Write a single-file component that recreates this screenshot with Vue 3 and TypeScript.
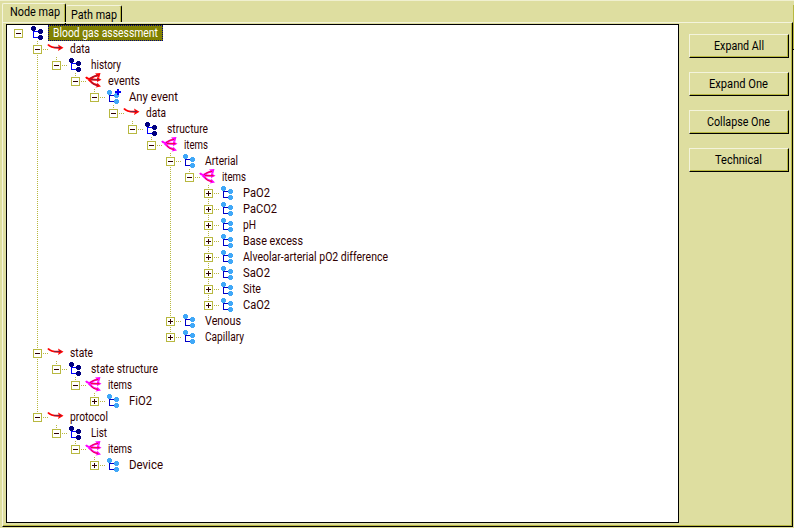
<script setup lang="ts">
import { defineComponent, h, shallowRef, type PropType, type VNode } from 'vue'

type Kind = 'dark' | 'light' | 'event' | 'arrow' | 'multi' | 'items'

interface TreeNode {
  label: string
  width: number
  kind: Kind
  closed?: boolean
  children?: TreeNode[]
}

const leaf = (label: string, width: number): TreeNode => ({ label, width, kind: 'light', closed: true })

const tree: TreeNode = {
  label: 'Blood gas assessment', width: 105, kind: 'dark',
  children: [
    { label: 'data', width: 20, kind: 'arrow', children: [
      { label: 'history', width: 30, kind: 'dark', children: [
        { label: 'events', width: 32, kind: 'multi', children: [
          { label: 'Any event', width: 49, kind: 'event', children: [
            { label: 'data', width: 20, kind: 'arrow', children: [
              { label: 'structure', width: 41, kind: 'dark', children: [
                { label: 'items', width: 24, kind: 'items', children: [
                  { label: 'Arterial', width: 33, kind: 'light', children: [
                    { label: 'items', width: 24, kind: 'items', children: [
                      leaf('PaO2', 27), leaf('PaCO2', 34), leaf('pH', 13), leaf('Base excess', 60),
                      leaf('Alveolar-arterial pO2 difference', 145), leaf('SaO2', 27), leaf('Site', 18), leaf('CaO2', 27),
                    ] },
                  ] },
                  leaf('Venous', 36),
                  leaf('Capillary', 39),
                ] },
              ] },
            ] },
          ] },
        ] },
      ] },
    ] },
    { label: 'state', width: 23, kind: 'arrow', children: [
      { label: 'state structure', width: 67, kind: 'dark', children: [
        { label: 'items', width: 24, kind: 'items', children: [leaf('FiO2', 23)] },
      ] },
    ] },
    { label: 'protocol', width: 38, kind: 'arrow', children: [
      { label: 'List', width: 16, kind: 'dark', children: [
        { label: 'items', width: 24, kind: 'items', children: [leaf('Device', 34)] },
      ] },
    ] },
  ],
}

const buttons = [
  { label: 'Expand All', width: 50 },
  { label: 'Expand One', width: 59 },
  { label: 'Collapse One', width: 63 },
  { label: 'Technical', width: 47 },
]
const selected = shallowRef<TreeNode>(tree)

/* Text line squeezed to a fixed advance width */
const FitText = defineComponent({
  props: { text: { type: String, required: true }, width: { type: Number, required: true } },
  setup: (p) => () =>
    h('svg', { class: 'fit', width: p.width + 1, height: 16 }, [
      h('text', { x: 0, y: 12, textLength: p.width, lengthAdjust: 'spacingAndGlyphs' }, p.text),
    ]),
})

function glyph(kind: Kind): VNode[] {
  if (kind === 'arrow') {
    return [
      h('path', { d: 'M-1 3.5 C1 6 4 7 11 6.7', class: 'stroke red' }),
      h('path', { d: 'M9 3.5 L14.5 6.7 L9 10 L10 6.7Z', fill: '#f00' }),
      h('path', { d: 'M5 6.5 H12', class: 'thin core' }),
    ]
  }
  if (kind === 'multi' || kind === 'items') {
    const pink = kind === 'items'
    return [
      h('path', {
        d: 'M-1 4 C0 6 3 7 12 6.7 M1.5 6.5 C4 6 5 3 11 2.5 M1.5 6.5 C4 8 5 12 11 12.3',
        class: ['stroke', pink ? 'pink' : 'red'],
      }),
      h('path', { d: 'M8 0.5 L13.5 0 L12 5.5 L10.5 3Z M10 4 L14.5 6.7 L10 9Z M10 9.5 L14 13.5 L8.5 14.5 L10.5 12.3Z', fill: pink ? '#f0f' : '#f00' }),
      h('path', { d: 'M3 5.7 C5 4.5 6 3 11 2.5 M4 6.7 H12.5 M4 8.5 C5.5 11 7 12 11 12.3', class: ['thin', pink ? 'warm' : 'core'] }),
    ]
  }
  const dark = kind === 'dark'
  const dot = (x: number, y: number) =>
    h('path', { d: `M${x + 1} ${y}h3v1h1v3h-1v1h-3v-1h-1v-3h1z`, fill: dark ? '#000080' : '#40a8f8' })
  const parts = [
    h('path', { d: 'M3.5 5V12.5H9M3.5 6.5H9', class: ['thin', dark ? 'blue' : 'deep'] }),
    dot(1, 1), dot(8, 4), dot(8, 10),
  ]
  if (kind === 'event') parts.push(h('path', { d: 'M11 0h2v2h2v2h-2v2h-2v-2h-2v-2h2z', fill: '#0000f0' }))
  return parts
}

const Branch = defineComponent({
  name: 'Branch',
  props: { node: { type: Object as PropType<TreeNode>, required: true }, root: Boolean },
  setup(p) {
    return (): VNode => {
      const n = p.node
      const arrowLike = ['arrow', 'multi', 'items'].includes(n.kind)
      return h('li', { class: ['branch', { root: p.root }] }, [
        h('div', { class: 'row' }, [
          h('svg', { class: 'toggle', width: 9, height: 9 }, [
            h('rect', { x: 0.5, y: 0.5, width: 8, height: 8, fill: '#fff', stroke: '#b8b840' }),
            h('path', { d: n.closed ? 'M2 4.5H7M4.5 2V7' : 'M2 4.5H7', stroke: '#300000' }),
          ]),
          h('span', { class: 'link' }),
          h('svg', { class: ['icon', { smooth: arrowLike }], width: 16, height: 16 }, glyph(n.kind)),
          h('span', {
            class: ['label', { near: arrowLike, selected: selected.value === n }],
            onClick: () => { selected.value = n },
          }, [h(FitText, { text: n.label, width: n.width })]),
        ]),
        n.children ? h('ul', { class: 'children' }, n.children.map((c) => h(Branch, { node: c }))) : null,
      ])
    }
  },
})
</script>

<template>
  <div class="window">
    <nav class="tabs">
      <div class="tab active"><FitText text="Node map" :width="50" /></div>
      <div class="tab"><FitText text="Path map" :width="46" /></div>
    </nav>
    <main class="panel">
      <ul class="tree"><Branch :node="tree" root /></ul>
      <aside class="actions">
        <button v-for="b in buttons" :key="b.label" type="button"><FitText :text="b.label" :width="b.width" /></button>
      </aside>
    </main>
    <div class="edge"></div>
  </div>
</template>

<style>
body { margin: 0; overflow: hidden; background: #dedea0; }
.fit { display: block; overflow: visible; font: 12.5px Roboto, "Liberation Sans", sans-serif; fill: currentColor; }
.tree, .children { list-style: none; margin: 0; padding: 0; }
.children { padding-left: 19px; }
.branch { position: relative; }
.branch::before {
  content: ""; position: absolute; left: 4px; top: 0; bottom: 0; width: 1px;
  background: repeating-linear-gradient(#b8b840 0 1px, transparent 1px 2px);
}
.branch:last-child::before { bottom: auto; height: 8px; }
.branch.root::before { display: none; }
.row { position: relative; display: flex; align-items: center; height: 16px; }
.toggle { display: block; flex: none; }
.link { width: 5px; height: 1px; margin-left: 1px; background: repeating-linear-gradient(90deg, #b8b840 0 1px, transparent 1px 2px); }
.root > .row > .link { visibility: hidden; }
.icon { display: block; flex: none; margin-left: 1px; overflow: visible; shape-rendering: crispEdges; }
.icon.smooth { shape-rendering: auto; }
.stroke { fill: none; stroke-width: 2px; }
.thin { fill: none; stroke-width: 1px; }
.red { stroke: #f00; }
.pink { stroke: #f0f; }
.core { stroke: #802040; }
.warm { stroke: #f01020; }
.blue { stroke: #00f; }
.deep { stroke: #0000c8; }
.label { display: block; height: 16px; margin-left: 7px; color: #300000; }
.label.near { margin-left: 4.5px; }
.label.selected {
  box-sizing: border-box; margin-left: 2px; padding: 0 4px 0 5px; color: #fff; background: #808000;
  outline: 1px dotted #000080; outline-offset: -1px;
}
</style>

<style scoped>
.window {
  position: relative; display: flex; flex-direction: column; box-sizing: border-box;
  width: 794px; height: 528px; padding: 0 1px 1px 2px; background: #dedea0; color: #000;
  border-top: 1px solid #f0f0d0;
}
.tabs { display: flex; height: 21px; }
.tab {
  box-sizing: border-box; width: 56px; height: 17px; margin-top: 4px; padding: 1px 0 0 5px;
  border-top: 1px solid #f4f4dc; border-right: 1px solid #000; box-shadow: inset -1px 0 #b8b840;
  border-radius: 2px 2px 0 0;
}
.tab.active {
  width: 64px; height: 21px; margin-top: 2px; padding: 0 0 0 7px;
  border-left: 1px solid #f4f4dc;
}
.panel {
  display: flex; flex: 1; box-sizing: border-box; min-height: 0; padding: 1px 0 3px 3px;
  border: solid; border-width: 1px; border-color: #f4f4dc #000 #000 #f4f4dc;
  box-shadow: inset -1px -1px #b8b840;
}
.tree {
  box-sizing: border-box; width: 673px; border: 1px solid #000; background: #fff; padding-left: 7px;
}
.actions { display: flex; flex-direction: column; gap: 14px; padding: 10px 0 0 10px; }
.actions button {
  display: flex; justify-content: center; box-sizing: border-box; width: 100px; height: 24px; margin: 0; padding: 3px 0 0;
  background: #dedea0; color: #000; border: solid; border-width: 1px;
  border-color: #f4f4dc #000 #000 #f4f4dc; box-shadow: inset -1px -1px #b8b840;
}
.edge { position: absolute; top: 4px; right: 0; width: 1px; height: 44px; background: #b8b840; border-bottom: 1px solid #000; }
</style>
